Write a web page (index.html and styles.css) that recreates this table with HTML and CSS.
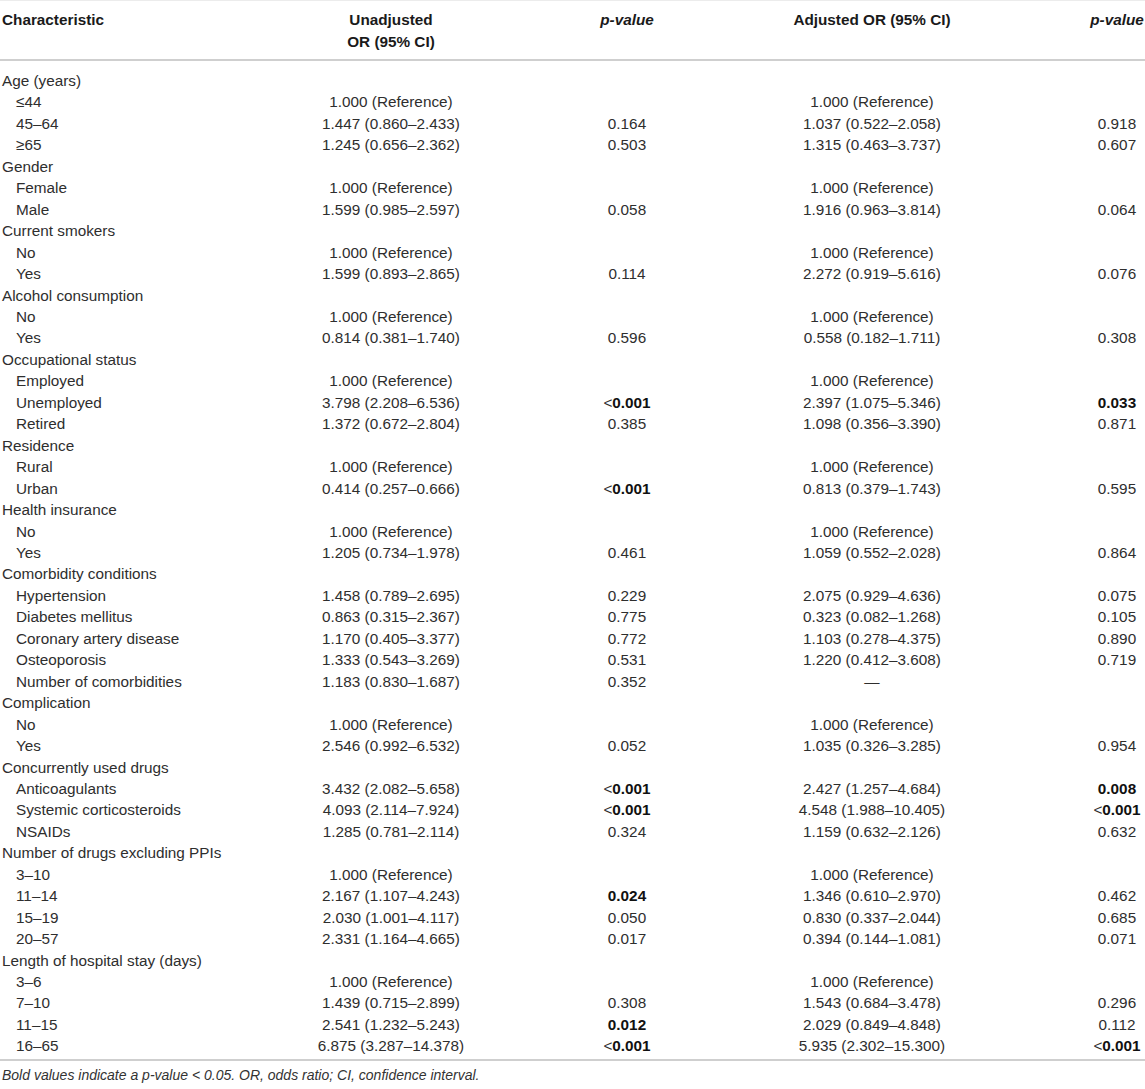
FILE: index.html
```html
<!DOCTYPE html>
<html lang="en">
<head>
<meta charset="utf-8">
<title>Table</title>
<link rel="stylesheet" href="styles.css">
</head>
<body>
<table class="tbl">
<colgroup>
<col class="c1"><col class="c2"><col class="c3"><col class="c4"><col class="c5">
</colgroup>
<thead>
<tr>
<th class="lab">Characteristic</th>
<th>Unadjusted<br>OR (95% CI)</th>
<th><em>p-value</em></th>
<th>Adjusted OR (95% CI)</th>
<th><em>p-value</em></th>
</tr>
</thead>
<tbody>
<tr class="first"><td class="lab">Age (years)</td><td></td><td></td><td></td><td></td></tr>
<tr><td class="lab sub">≤44</td><td>1.000 (Reference)</td><td></td><td>1.000 (Reference)</td><td></td></tr>
<tr><td class="lab sub">45–64</td><td>1.447 (0.860–2.433)</td><td>0.164</td><td>1.037 (0.522–2.058)</td><td>0.918</td></tr>
<tr><td class="lab sub">≥65</td><td>1.245 (0.656–2.362)</td><td>0.503</td><td>1.315 (0.463–3.737)</td><td>0.607</td></tr>
<tr><td class="lab">Gender</td><td></td><td></td><td></td><td></td></tr>
<tr><td class="lab sub">Female</td><td>1.000 (Reference)</td><td></td><td>1.000 (Reference)</td><td></td></tr>
<tr><td class="lab sub">Male</td><td>1.599 (0.985–2.597)</td><td>0.058</td><td>1.916 (0.963–3.814)</td><td>0.064</td></tr>
<tr><td class="lab">Current smokers</td><td></td><td></td><td></td><td></td></tr>
<tr><td class="lab sub">No</td><td>1.000 (Reference)</td><td></td><td>1.000 (Reference)</td><td></td></tr>
<tr><td class="lab sub">Yes</td><td>1.599 (0.893–2.865)</td><td>0.114</td><td>2.272 (0.919–5.616)</td><td>0.076</td></tr>
<tr><td class="lab">Alcohol consumption</td><td></td><td></td><td></td><td></td></tr>
<tr><td class="lab sub">No</td><td>1.000 (Reference)</td><td></td><td>1.000 (Reference)</td><td></td></tr>
<tr><td class="lab sub">Yes</td><td>0.814 (0.381–1.740)</td><td>0.596</td><td>0.558 (0.182–1.711)</td><td>0.308</td></tr>
<tr><td class="lab">Occupational status</td><td></td><td></td><td></td><td></td></tr>
<tr><td class="lab sub">Employed</td><td>1.000 (Reference)</td><td></td><td>1.000 (Reference)</td><td></td></tr>
<tr><td class="lab sub">Unemployed</td><td>3.798 (2.208–6.536)</td><td>&lt;<b>0.001</b></td><td>2.397 (1.075–5.346)</td><td><b>0.033</b></td></tr>
<tr><td class="lab sub">Retired</td><td>1.372 (0.672–2.804)</td><td>0.385</td><td>1.098 (0.356–3.390)</td><td>0.871</td></tr>
<tr><td class="lab">Residence</td><td></td><td></td><td></td><td></td></tr>
<tr><td class="lab sub">Rural</td><td>1.000 (Reference)</td><td></td><td>1.000 (Reference)</td><td></td></tr>
<tr><td class="lab sub">Urban</td><td>0.414 (0.257–0.666)</td><td>&lt;<b>0.001</b></td><td>0.813 (0.379–1.743)</td><td>0.595</td></tr>
<tr><td class="lab">Health insurance</td><td></td><td></td><td></td><td></td></tr>
<tr><td class="lab sub">No</td><td>1.000 (Reference)</td><td></td><td>1.000 (Reference)</td><td></td></tr>
<tr><td class="lab sub">Yes</td><td>1.205 (0.734–1.978)</td><td>0.461</td><td>1.059 (0.552–2.028)</td><td>0.864</td></tr>
<tr><td class="lab">Comorbidity conditions</td><td></td><td></td><td></td><td></td></tr>
<tr><td class="lab sub">Hypertension</td><td>1.458 (0.789–2.695)</td><td>0.229</td><td>2.075 (0.929–4.636)</td><td>0.075</td></tr>
<tr><td class="lab sub">Diabetes mellitus</td><td>0.863 (0.315–2.367)</td><td>0.775</td><td>0.323 (0.082–1.268)</td><td>0.105</td></tr>
<tr><td class="lab sub">Coronary artery disease</td><td>1.170 (0.405–3.377)</td><td>0.772</td><td>1.103 (0.278–4.375)</td><td>0.890</td></tr>
<tr><td class="lab sub">Osteoporosis</td><td>1.333 (0.543–3.269)</td><td>0.531</td><td>1.220 (0.412–3.608)</td><td>0.719</td></tr>
<tr><td class="lab sub">Number of comorbidities</td><td>1.183 (0.830–1.687)</td><td>0.352</td><td>—</td><td></td></tr>
<tr><td class="lab">Complication</td><td></td><td></td><td></td><td></td></tr>
<tr><td class="lab sub">No</td><td>1.000 (Reference)</td><td></td><td>1.000 (Reference)</td><td></td></tr>
<tr><td class="lab sub">Yes</td><td>2.546 (0.992–6.532)</td><td>0.052</td><td>1.035 (0.326–3.285)</td><td>0.954</td></tr>
<tr><td class="lab">Concurrently used drugs</td><td></td><td></td><td></td><td></td></tr>
<tr><td class="lab sub">Anticoagulants</td><td>3.432 (2.082–5.658)</td><td>&lt;<b>0.001</b></td><td>2.427 (1.257–4.684)</td><td><b>0.008</b></td></tr>
<tr><td class="lab sub">Systemic corticosteroids</td><td>4.093 (2.114–7.924)</td><td>&lt;<b>0.001</b></td><td>4.548 (1.988–10.405)</td><td>&lt;<b>0.001</b></td></tr>
<tr><td class="lab sub">NSAIDs</td><td>1.285 (0.781–2.114)</td><td>0.324</td><td>1.159 (0.632–2.126)</td><td>0.632</td></tr>
<tr><td class="lab">Number of drugs excluding PPIs</td><td></td><td></td><td></td><td></td></tr>
<tr><td class="lab sub">3–10</td><td>1.000 (Reference)</td><td></td><td>1.000 (Reference)</td><td></td></tr>
<tr><td class="lab sub">11–14</td><td>2.167 (1.107–4.243)</td><td><b>0.024</b></td><td>1.346 (0.610–2.970)</td><td>0.462</td></tr>
<tr><td class="lab sub">15–19</td><td>2.030 (1.001–4.117)</td><td>0.050</td><td>0.830 (0.337–2.044)</td><td>0.685</td></tr>
<tr><td class="lab sub">20–57</td><td>2.331 (1.164–4.665)</td><td>0.017</td><td>0.394 (0.144–1.081)</td><td>0.071</td></tr>
<tr><td class="lab">Length of hospital stay (days)</td><td></td><td></td><td></td><td></td></tr>
<tr><td class="lab sub">3–6</td><td>1.000 (Reference)</td><td></td><td>1.000 (Reference)</td><td></td></tr>
<tr><td class="lab sub">7–10</td><td>1.439 (0.715–2.899)</td><td>0.308</td><td>1.543 (0.684–3.478)</td><td>0.296</td></tr>
<tr><td class="lab sub">11–15</td><td>2.541 (1.232–5.243)</td><td><b>0.012</b></td><td>2.029 (0.849–4.848)</td><td>0.112</td></tr>
<tr class="last"><td class="lab sub">16–65</td><td>6.875 (3.287–14.378)</td><td>&lt;<b>0.001</b></td><td>5.935 (2.302–15.300)</td><td>&lt;<b>0.001</b></td></tr>
</tbody>
</table>
<p class="note">Bold values indicate a p-value &lt; 0.05. OR, odds ratio; CI, confidence interval.</p>
</body>
</html>
```

FILE: styles.css
```css
html, body {
  margin: 0;
  padding: 0;
  background: #ffffff;
}
body {
  font-family: "Liberation Sans", Arial, sans-serif;
  font-size: 15.3px;
  color: #2e2e2e;
}
.tbl {
  width: 1145px;
  table-layout: fixed;
  border-collapse: collapse;
  border-top: 1px solid #ececec;
}
.c1 { width: 183px; }
.c2 { width: 416px; }
.c3 { width: 56px; }
.c4 { width: 434px; }
.c5 { width: 56px; }
.tbl th {
  font-weight: bold;
  color: #1a1a1a;
  text-align: center;
  vertical-align: top;
  line-height: 22px;
  padding: 8px 0 6px;
  border-bottom: 2px solid #cfcfcf;
  white-space: nowrap;
}
.tbl th em { font-style: italic; }
.tbl td {
  text-align: center;
  padding: 0;
  line-height: 21.45px;
  white-space: nowrap;
}
.tbl .lab {
  text-align: left;
  padding-left: 2px;
}
.tbl .sub {
  padding-left: 16px;
}
.tbl tr.first td { padding-top: 9px; }
.tbl tr.last td {
  padding-bottom: 2px;
  border-bottom: 2px solid #cfcfcf;
}
.tbl b { font-weight: bold; color: #111; }
.note {
  margin: 0;
  padding: 4px 0 0 2px;
  font-style: italic;
  font-size: 14px;
  line-height: 20px;
  color: #333;
}
```
